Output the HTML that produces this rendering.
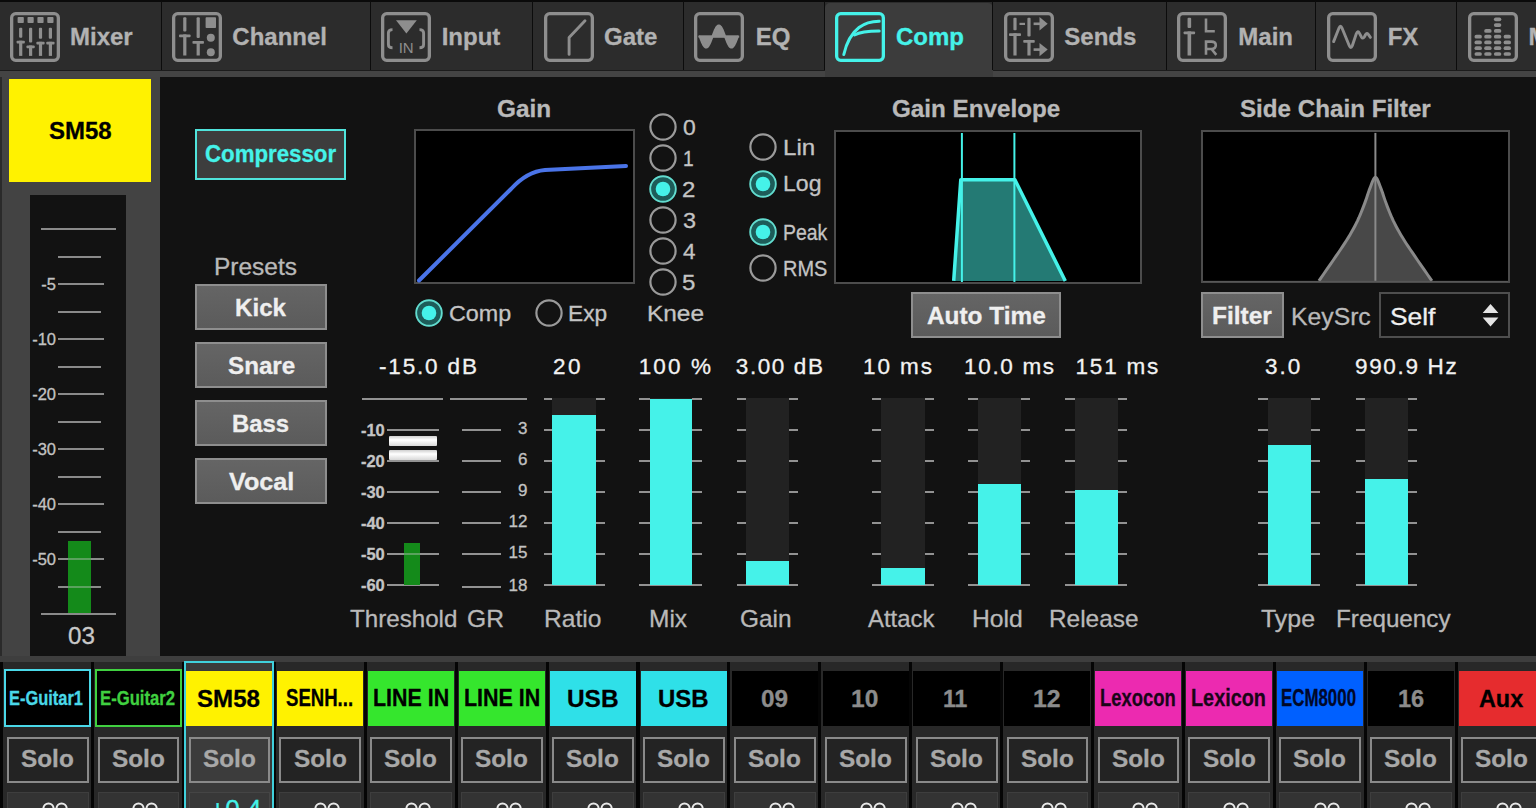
<!DOCTYPE html>
<html><head><meta charset="utf-8"><style>
html,body{margin:0;padding:0;}
body{width:1536px;height:808px;overflow:hidden;position:relative;background:#121212;font-family:"Liberation Sans",sans-serif;}
.a{position:absolute;}
.t{white-space:nowrap;-webkit-text-stroke:0.3px currentColor;}
svg text{font-family:"Liberation Sans",sans-serif;}
</style></head><body>
<div class="a" style="left:0px;top:0px;width:1536px;height:70px;background:#2c2c2c;"></div>
<div class="a" style="left:0px;top:0px;width:1536px;height:1.5px;background:#0a0a0a;"></div>
<div class="a" style="left:0px;top:69.5px;width:1536px;height:1.5px;background:#1c1c1c;"></div>
<div class="a" style="left:0px;top:71px;width:1536px;height:6px;background:#444444;"></div>
<div class="a" style="left:160.7px;top:1px;width:1.2px;height:69px;background:#0c0c0c;"></div>
<div class="a" style="left:369.8px;top:1px;width:1.2px;height:69px;background:#0c0c0c;"></div>
<div class="a" style="left:531.7px;top:1px;width:1.2px;height:69px;background:#0c0c0c;"></div>
<div class="a" style="left:683px;top:1px;width:1.2px;height:69px;background:#0c0c0c;"></div>
<div class="a" style="left:1165.7px;top:1px;width:1.2px;height:69px;background:#0c0c0c;"></div>
<div class="a" style="left:1315px;top:1px;width:1.2px;height:69px;background:#0c0c0c;"></div>
<div class="a" style="left:1456px;top:1px;width:1.2px;height:69px;background:#0c0c0c;"></div>
<div class="a" style="left:824.5px;top:2.5px;width:168px;height:74.5px;background:#3c3c3c;border-top-left-radius:5px;border-top-right-radius:5px;"></div>
<div class="a" style="left:823.8px;top:1px;width:1.2px;height:69px;background:#0c0c0c;"></div>
<div class="a" style="left:992px;top:1px;width:1.2px;height:69px;background:#0c0c0c;"></div>
<svg class="a" style="left:10px;top:12px" width="50" height="50" viewBox="0 0 50 50"><rect x="1.65" y="1.65" width="46.7" height="46.7" rx="4" ry="4" fill="none" stroke="#8e8e8e" stroke-width="3.3"/><rect x="7.6" y="5" width="6.2" height="6" rx="0.8" fill="#8e8e8e"/><rect x="9.1" y="15.7" width="3.2" height="10" rx="1" fill="#8e8e8e"/><rect x="9.1" y="28.7" width="3.2" height="15.2" fill="#8e8e8e"/><rect x="6.6" y="28.7" width="8.2" height="2.8" rx="0.8" fill="#8e8e8e"/><rect x="17.5" y="5" width="6.2" height="6" rx="0.8" fill="#8e8e8e"/><rect x="19" y="15.7" width="3.2" height="14.8" rx="1" fill="#8e8e8e"/><rect x="19" y="33.5" width="3.2" height="10.4" fill="#8e8e8e"/><rect x="16.5" y="33.5" width="8.2" height="2.8" rx="0.8" fill="#8e8e8e"/><rect x="27.4" y="5" width="6.2" height="6" rx="0.8" fill="#8e8e8e"/><rect x="28.9" y="15.7" width="3.2" height="11.1" rx="1" fill="#8e8e8e"/><rect x="28.9" y="29.8" width="3.2" height="14.1" fill="#8e8e8e"/><rect x="26.4" y="29.8" width="8.2" height="2.8" rx="0.8" fill="#8e8e8e"/><rect x="37.3" y="5" width="6.2" height="6" rx="0.8" fill="#8e8e8e"/><rect x="38.8" y="15.7" width="3.2" height="11.1" rx="1" fill="#8e8e8e"/><rect x="38.8" y="29.8" width="3.2" height="14.1" fill="#8e8e8e"/><rect x="36.3" y="29.8" width="8.2" height="2.8" rx="0.8" fill="#8e8e8e"/></svg>
<svg class="a" style="left:172px;top:12px" width="50" height="50" viewBox="0 0 50 50"><rect x="1.65" y="1.65" width="46.7" height="46.7" rx="4" ry="4" fill="none" stroke="#8e8e8e" stroke-width="3.3"/><rect x="11.2" y="5.3" width="3.2" height="14.1" rx="1" fill="#8e8e8e"/><rect x="11.2" y="22.4" width="3.2" height="21.1" fill="#8e8e8e"/><rect x="7.05" y="22.4" width="11.5" height="2.8" rx="0.8" fill="#8e8e8e"/><rect x="24.6" y="5.3" width="3.2" height="20.7" rx="1" fill="#8e8e8e"/><rect x="24.6" y="29" width="3.2" height="14.5" fill="#8e8e8e"/><rect x="20.45" y="29" width="11.5" height="2.8" rx="0.8" fill="#8e8e8e"/><rect x="33.6" y="5.3" width="10.4" height="10.7" rx="0.8" fill="#8e8e8e"/><circle cx="38.8" cy="25.7" r="4" fill="#8e8e8e"/><circle cx="38.8" cy="40.2" r="4" fill="#8e8e8e"/></svg>
<svg class="a" style="left:380.8px;top:12px" width="50" height="50" viewBox="0 0 50 50"><rect x="1.65" y="1.65" width="46.7" height="46.7" rx="4" ry="4" fill="none" stroke="#8e8e8e" stroke-width="3.3"/><path d="M15 8.2 L35.8 8.2 L25.4 21.6 Z" fill="#8e8e8e"/><path d="M11.5 17.6 Q7.4 17.6 7.4 21 L7.4 32.5 Q7.4 35.8 11.5 35.8" fill="none" stroke="#8e8e8e" stroke-width="2.9"/><path d="M38.5 17.6 Q42.6 17.6 42.6 21 L42.6 32.5 Q42.6 35.8 38.5 35.8" fill="none" stroke="#8e8e8e" stroke-width="2.9"/><text x="25.2" y="41" font-size="15" fill="#8e8e8e" text-anchor="middle" style="font-family:Liberation Sans">IN</text></svg>
<svg class="a" style="left:543.5px;top:12px" width="50" height="50" viewBox="0 0 50 50"><rect x="1.65" y="1.65" width="46.7" height="46.7" rx="4" ry="4" fill="none" stroke="#8e8e8e" stroke-width="3.3"/><path d="M25.1 42.4 L25.1 25.5 L41 8.8" fill="none" stroke="#8e8e8e" stroke-width="2.9" stroke-linecap="round" stroke-linejoin="round"/></svg>
<svg class="a" style="left:694.4px;top:12px" width="50" height="50" viewBox="0 0 50 50"><rect x="1.65" y="1.65" width="46.7" height="46.7" rx="4" ry="4" fill="none" stroke="#8e8e8e" stroke-width="3.3"/><rect x="4.4" y="23.6" width="40.8" height="2" fill="#8e8e8e"/><path d="M5.8 24.5 L5.8 24.43 L6.75 27 L7.7 29.44 L8.65 31.6 L9.6 33.37 L10.55 34.64 L11.5 35.36 L12.45 35.47 L13.4 34.97 L14.35 33.9 L15.3 32.3 L16.25 30.27 L17.2 27.93 L18.15 25.39 L19.1 22.8 L20.05 20.31 L21 18.05 L21.95 16.14 L22.9 14.7 L23.85 13.8 L24.8 13.5 L25.75 13.8 L26.7 14.7 L27.65 16.14 L28.6 18.05 L29.55 20.31 L30.5 22.8 L31.45 25.39 L32.4 27.93 L33.35 30.27 L34.3 32.3 L35.25 33.9 L36.2 34.97 L37.15 35.47 L38.1 35.36 L39.05 34.64 L40 33.37 L40.95 31.6 L41.9 29.44 L42.85 27 L43.8 24.43 L43.8 24.5 Z" fill="#8e8e8e" stroke="#8e8e8e" stroke-width="2.2" stroke-linejoin="round"/></svg>
<svg class="a" style="left:835px;top:12px" width="50" height="50" viewBox="0 0 50 50"><rect x="1.65" y="1.65" width="46.7" height="46.7" rx="4" ry="4" fill="none" stroke="#45f2e9" stroke-width="3.3"/><path d="M8.8 42.5 Q13 24 24 15.5 Q32 9.5 44.2 9.3" fill="none" stroke="#45f2e9" stroke-width="3" stroke-linecap="round"/><path d="M19.5 23 Q26.5 19 44.2 19" fill="none" stroke="#45f2e9" stroke-width="3" stroke-linecap="round"/></svg>
<svg class="a" style="left:1003.7px;top:12px" width="50" height="50" viewBox="0 0 50 50"><rect x="1.65" y="1.65" width="46.7" height="46.7" rx="4" ry="4" fill="none" stroke="#8e8e8e" stroke-width="3.3"/><rect x="9.4" y="5.7" width="3.2" height="12.5" rx="1" fill="#8e8e8e"/><rect x="9.4" y="21.2" width="3.2" height="22.3" fill="#8e8e8e"/><rect x="5" y="21.2" width="12" height="2.8" rx="0.8" fill="#8e8e8e"/><rect x="23.4" y="5.7" width="3.2" height="18.9" rx="1" fill="#8e8e8e"/><rect x="23.4" y="27.9" width="3.2" height="15.6" fill="#8e8e8e"/><rect x="19.25" y="27.9" width="11.5" height="2.8" rx="0.8" fill="#8e8e8e"/><rect x="15.5" y="10.8" width="5.5" height="2.2" fill="#8e8e8e"/><rect x="29.6" y="10.5" width="7" height="2.6" fill="#8e8e8e"/><path d="M35.5 5 L43.7 11.8 L35.5 18.5 Z" fill="#8e8e8e"/><rect x="29.6" y="36.3" width="7" height="2.6" fill="#8e8e8e"/><path d="M35.5 30.9 L43.7 37.6 L35.5 44.3 Z" fill="#8e8e8e"/></svg>
<svg class="a" style="left:1177.3px;top:12px" width="50" height="50" viewBox="0 0 50 50"><rect x="1.65" y="1.65" width="46.7" height="46.7" rx="4" ry="4" fill="none" stroke="#8e8e8e" stroke-width="3.3"/><rect x="10.55" y="5.7" width="3.6" height="10.3" rx="1" fill="#8e8e8e"/><rect x="10.55" y="19.4" width="3.6" height="24.1" fill="#8e8e8e"/><rect x="6.65" y="19.4" width="11.4" height="2.8" rx="0.8" fill="#8e8e8e"/><path d="M29 6.4 L29 19.2 L37.8 19.2" fill="none" stroke="#8e8e8e" stroke-width="2.6"/><path d="M29 42.8 L29 29.6 L34.3 29.6 Q38.8 29.6 38.8 33.3 Q38.8 37 34.3 37 L29 37 M34.5 37 L39.3 42.8" fill="none" stroke="#8e8e8e" stroke-width="2.6"/></svg>
<svg class="a" style="left:1326.5px;top:12px" width="50" height="50" viewBox="0 0 50 50"><rect x="1.65" y="1.65" width="46.7" height="46.7" rx="4" ry="4" fill="none" stroke="#8e8e8e" stroke-width="3.3"/><path d="M6.6 29.6 L12 16 Q13.5 12.3 15 16 L22.3 33.8 Q23.8 37.3 25.3 33.8 L29.3 21.8 Q30.8 17.8 32.5 21.3 L34.5 25.2 Q35.8 27.2 37.3 25 L38.6 22.5 Q39.8 20.6 41.3 22.4 L43.4 25.4" fill="none" stroke="#8e8e8e" stroke-width="2.9" stroke-linecap="round" stroke-linejoin="round"/></svg>
<svg class="a" style="left:1467.8px;top:12px" width="50" height="50" viewBox="0 0 50 50"><rect x="1.65" y="1.65" width="46.7" height="46.7" rx="4" ry="4" fill="none" stroke="#8e8e8e" stroke-width="3.3"/><rect x="6.5" y="40.15" width="7.4" height="3.7" rx="1.85" fill="#8e8e8e"/><rect x="6.5" y="34.37" width="7.4" height="3.7" rx="1.85" fill="#8e8e8e"/><rect x="6.5" y="28.59" width="7.4" height="3.7" rx="1.85" fill="#8e8e8e"/><rect x="6.5" y="22.81" width="7.4" height="3.7" rx="1.85" fill="#8e8e8e"/><rect x="16.2" y="40.15" width="7.4" height="3.7" rx="1.85" fill="#8e8e8e"/><rect x="16.2" y="34.37" width="7.4" height="3.7" rx="1.85" fill="#8e8e8e"/><rect x="16.2" y="28.59" width="7.4" height="3.7" rx="1.85" fill="#8e8e8e"/><rect x="16.2" y="22.81" width="7.4" height="3.7" rx="1.85" fill="#8e8e8e"/><rect x="16.2" y="17.03" width="7.4" height="3.7" rx="1.85" fill="#8e8e8e"/><rect x="25.9" y="40.15" width="7.4" height="3.7" rx="1.85" fill="#8e8e8e"/><rect x="25.9" y="34.37" width="7.4" height="3.7" rx="1.85" fill="#8e8e8e"/><rect x="25.9" y="28.59" width="7.4" height="3.7" rx="1.85" fill="#8e8e8e"/><rect x="25.9" y="22.81" width="7.4" height="3.7" rx="1.85" fill="#8e8e8e"/><rect x="25.9" y="17.03" width="7.4" height="3.7" rx="1.85" fill="#8e8e8e"/><rect x="25.9" y="11.25" width="7.4" height="3.7" rx="1.85" fill="#8e8e8e"/><rect x="25.9" y="5.47" width="7.4" height="3.7" rx="1.85" fill="#8e8e8e"/><rect x="35.6" y="40.15" width="7.4" height="3.7" rx="1.85" fill="#8e8e8e"/><rect x="35.6" y="34.37" width="7.4" height="3.7" rx="1.85" fill="#8e8e8e"/><rect x="35.6" y="28.59" width="7.4" height="3.7" rx="1.85" fill="#8e8e8e"/><rect x="35.6" y="22.81" width="7.4" height="3.7" rx="1.85" fill="#8e8e8e"/></svg>
<div class="a t" style="left:70px;top:25.18px;font-size:24px;line-height:24px;font-weight:700;color:#b2b2b2;">Mixer</div>
<div class="a t" style="left:232.3px;top:25.18px;font-size:24px;line-height:24px;font-weight:700;color:#b2b2b2;">Channel</div>
<div class="a t" style="left:441.7px;top:25.18px;font-size:24px;line-height:24px;font-weight:700;color:#b2b2b2;">Input</div>
<div class="a t" style="left:604px;top:25.18px;font-size:24px;line-height:24px;font-weight:700;color:#b2b2b2;">Gate</div>
<div class="a t" style="left:755.7px;top:25.18px;font-size:24px;line-height:24px;font-weight:700;color:#b2b2b2;">EQ</div>
<div class="a t" style="left:896px;top:25.18px;font-size:24px;line-height:24px;font-weight:700;color:#45f2e9;">Comp</div>
<div class="a t" style="left:1064.3px;top:25.18px;font-size:24px;line-height:24px;font-weight:700;color:#b2b2b2;">Sends</div>
<div class="a t" style="left:1238.3px;top:25.18px;font-size:24px;line-height:24px;font-weight:700;color:#b2b2b2;">Main</div>
<div class="a t" style="left:1387.7px;top:25.18px;font-size:24px;line-height:24px;font-weight:700;color:#b2b2b2;">FX</div>
<div class="a t" style="left:1528.6px;top:25.18px;font-size:24px;line-height:24px;font-weight:700;color:#b2b2b2;">Mixer</div>
<div class="a" style="left:0px;top:77px;width:160px;height:579px;background:#434343;"></div>
<div class="a" style="left:0px;top:77px;width:1.5px;height:579px;background:#2a2a2a;"></div>
<div class="a" style="left:9px;top:78.5px;width:142px;height:103.5px;background:#fff200;"></div>
<div id="t0" class="a t" style="left:49.05px;top:118.88px;font-size:24px;line-height:24px;font-weight:700;color:#000;transform-origin:0 0;transform:scaleX(0.9992)">SM58</div>
<div class="a" style="left:30px;top:195px;width:96px;height:460.6px;background:#121212;"></div>
<div class="a" style="left:67.5px;top:540.7px;width:23.2px;height:72.3px;background:#148a1a;"></div>
<div class="a" style="left:40.5px;top:228px;width:75.8px;height:2.2px;background:#8a8a8a;"></div>
<div class="a" style="left:58px;top:255.5px;width:43px;height:2.2px;background:#8a8a8a;"></div>
<div class="a" style="left:58px;top:283px;width:46px;height:2.2px;background:#8a8a8a;"></div>
<div class="a" style="left:58px;top:310.5px;width:43px;height:2.2px;background:#8a8a8a;"></div>
<div class="a" style="left:58px;top:338px;width:46px;height:2.2px;background:#8a8a8a;"></div>
<div class="a" style="left:58px;top:365.5px;width:43px;height:2.2px;background:#8a8a8a;"></div>
<div class="a" style="left:58px;top:393px;width:46px;height:2.2px;background:#8a8a8a;"></div>
<div class="a" style="left:58px;top:420.5px;width:43px;height:2.2px;background:#8a8a8a;"></div>
<div class="a" style="left:58px;top:448px;width:46px;height:2.2px;background:#8a8a8a;"></div>
<div class="a" style="left:58px;top:475.5px;width:43px;height:2.2px;background:#8a8a8a;"></div>
<div class="a" style="left:58px;top:503px;width:46px;height:2.2px;background:#8a8a8a;"></div>
<div class="a" style="left:58px;top:530.5px;width:43px;height:2.2px;background:#8a8a8a;"></div>
<div class="a" style="left:58px;top:558px;width:9.5px;height:2.2px;background:#8a8a8a;"></div>
<div class="a" style="left:67.5px;top:558px;width:23.2px;height:2.2px;background:#5aa25e;"></div>
<div class="a" style="left:90.7px;top:558px;width:13.3px;height:2.2px;background:#8a8a8a;"></div>
<div class="a" style="left:58px;top:585.5px;width:9.5px;height:2.2px;background:#8a8a8a;"></div>
<div class="a" style="left:67.5px;top:585.5px;width:23.2px;height:2.2px;background:#5aa25e;"></div>
<div class="a" style="left:90.7px;top:585.5px;width:10.3px;height:2.2px;background:#8a8a8a;"></div>
<div class="a" style="left:40.5px;top:613px;width:75.8px;height:2.2px;background:#8a8a8a;"></div>
<div class="a t" style="left:-944px;width:1000px;text-align:right;top:276.03px;font-size:16.5px;line-height:16.5px;font-weight:400;color:#c2c2c2;">-5</div>
<div class="a t" style="left:-944px;width:1000px;text-align:right;top:331.03px;font-size:16.5px;line-height:16.5px;font-weight:400;color:#c2c2c2;">-10</div>
<div class="a t" style="left:-944px;width:1000px;text-align:right;top:386.03px;font-size:16.5px;line-height:16.5px;font-weight:400;color:#c2c2c2;">-20</div>
<div class="a t" style="left:-944px;width:1000px;text-align:right;top:441.03px;font-size:16.5px;line-height:16.5px;font-weight:400;color:#c2c2c2;">-30</div>
<div class="a t" style="left:-944px;width:1000px;text-align:right;top:496.03px;font-size:16.5px;line-height:16.5px;font-weight:400;color:#c2c2c2;">-40</div>
<div class="a t" style="left:-944px;width:1000px;text-align:right;top:551.03px;font-size:16.5px;line-height:16.5px;font-weight:400;color:#c2c2c2;">-50</div>
<div id="t1" class="a t" style="left:67.71px;top:625.03px;font-size:23px;line-height:23px;font-weight:400;color:#c8c8c8;transform-origin:0 0;transform:scaleX(1.0526)">03</div>
<div class="a" style="left:195.2px;top:129.4px;width:150.8px;height:50.4px;background:#3d3d3d;border:2px solid #50e4dc;box-sizing:border-box;"></div>
<div id="t2" class="a t" style="left:204.89px;top:142.26px;font-size:24.5px;line-height:24.5px;font-weight:700;color:#45f2e9;transform-origin:0 0;transform:scaleX(0.9084)">Compressor</div>
<div id="t3" class="a t" style="left:213.76px;top:254.68px;font-size:24px;line-height:24px;font-weight:400;color:#b9b9b9;transform-origin:0 0;transform:scaleX(1.0191)">Presets</div>
<div class="a" style="left:195.3px;top:284.3px;width:131.7px;height:46.2px;background:linear-gradient(#656565,#5b5b5b);border:2px solid #8e8e8e;box-sizing:border-box;"></div>
<div id="t4" class="a t" style="left:235.19px;top:296.08px;font-size:24px;line-height:24px;font-weight:700;color:#efefef;transform-origin:0 0;transform:scaleX(1.0061)">Kick</div>
<div class="a" style="left:195.3px;top:342.3px;width:131.7px;height:46.2px;background:linear-gradient(#656565,#5b5b5b);border:2px solid #8e8e8e;box-sizing:border-box;"></div>
<div id="t5" class="a t" style="left:227.64px;top:354.08px;font-size:24px;line-height:24px;font-weight:700;color:#efefef;transform-origin:0 0;transform:scaleX(1.0077)">Snare</div>
<div class="a" style="left:195.3px;top:400.3px;width:131.7px;height:46.2px;background:linear-gradient(#656565,#5b5b5b);border:2px solid #8e8e8e;box-sizing:border-box;"></div>
<div id="t6" class="a t" style="left:232.31px;top:412.08px;font-size:24px;line-height:24px;font-weight:700;color:#efefef;transform-origin:0 0;transform:scaleX(0.9945)">Bass</div>
<div class="a" style="left:195.3px;top:458.3px;width:131.7px;height:46.2px;background:linear-gradient(#656565,#5b5b5b);border:2px solid #8e8e8e;box-sizing:border-box;"></div>
<div id="t7" class="a t" style="left:228.84px;top:470.08px;font-size:24px;line-height:24px;font-weight:700;color:#efefef;transform-origin:0 0;transform:scaleX(1.0490)">Vocal</div>
<div id="t8" class="a t" style="left:496.79px;top:96.98px;font-size:24px;line-height:24px;font-weight:700;color:#b9b9b9;transform-origin:0 0;transform:scaleX(1.0137)">Gain</div>
<div class="a" style="left:414px;top:129px;width:221px;height:155px;background:#000;border:2px solid #4c4c4c;box-sizing:border-box;"></div>
<svg class="a" style="left:414px;top:129px" width="221" height="155" viewBox="414 129 221 155"><path d="M419 280.5 L511 189 Q527 171.5 545 170 L626 165.9" fill="none" stroke="#4a74e8" stroke-width="4" stroke-linecap="round"/></svg>
<svg class="a" style="left:647.6px;top:112.2px" width="30" height="30" viewBox="-15 -15 30 30"><circle r="12.6" fill="none" stroke="#9a9a9a" stroke-width="2.2"/></svg>
<div id="t9" class="a t" style="left:682.62px;top:116.78px;font-size:22px;line-height:22px;font-weight:400;color:#c4c4c4;transform-origin:0 0;transform:scaleX(1.0419)">0</div>
<svg class="a" style="left:647.6px;top:143.1px" width="30" height="30" viewBox="-15 -15 30 30"><circle r="12.6" fill="none" stroke="#9a9a9a" stroke-width="2.2"/></svg>
<div id="t10" class="a t" style="left:682.97px;top:147.88px;font-size:22px;line-height:22px;font-weight:400;color:#c4c4c4;transform-origin:0 0;transform:scaleX(0.8737)">1</div>
<svg class="a" style="left:647.6px;top:174px" width="30" height="30" viewBox="-15 -15 30 30"><circle r="12.8" fill="#1d5c59" stroke="#62dccf" stroke-width="1.9"/><circle r="7.3" fill="#45f2e9"/></svg>
<div id="t11" class="a t" style="left:682.31px;top:178.98px;font-size:22px;line-height:22px;font-weight:400;color:#c4c4c4;transform-origin:0 0;transform:scaleX(1.0927)">2</div>
<svg class="a" style="left:647.6px;top:204.9px" width="30" height="30" viewBox="-15 -15 30 30"><circle r="12.6" fill="none" stroke="#9a9a9a" stroke-width="2.2"/></svg>
<div id="t12" class="a t" style="left:682.6px;top:210.08px;font-size:22px;line-height:22px;font-weight:400;color:#c4c4c4;transform-origin:0 0;transform:scaleX(1.0667)">3</div>
<svg class="a" style="left:647.6px;top:235.8px" width="30" height="30" viewBox="-15 -15 30 30"><circle r="12.6" fill="none" stroke="#9a9a9a" stroke-width="2.2"/></svg>
<div id="t13" class="a t" style="left:682.89px;top:241.18px;font-size:22px;line-height:22px;font-weight:400;color:#c4c4c4;transform-origin:0 0;transform:scaleX(1.0182)">4</div>
<svg class="a" style="left:647.6px;top:266.7px" width="30" height="30" viewBox="-15 -15 30 30"><circle r="12.6" fill="none" stroke="#9a9a9a" stroke-width="2.2"/></svg>
<div id="t14" class="a t" style="left:682.31px;top:272.28px;font-size:22px;line-height:22px;font-weight:400;color:#c4c4c4;transform-origin:0 0;transform:scaleX(1.0927)">5</div>
<svg class="a" style="left:413.8px;top:297.9px" width="30" height="30" viewBox="-15 -15 30 30"><circle r="12.8" fill="#1d5c59" stroke="#62dccf" stroke-width="1.9"/><circle r="7.3" fill="#45f2e9"/></svg>
<div id="t15" class="a t" style="left:448.54px;top:303.38px;font-size:22px;line-height:22px;font-weight:400;color:#c4c4c4;transform-origin:0 0;transform:scaleX(1.0608)">Comp</div>
<svg class="a" style="left:533.7px;top:297.9px" width="30" height="30" viewBox="-15 -15 30 30"><circle r="12.6" fill="none" stroke="#9a9a9a" stroke-width="2.2"/></svg>
<div id="t16" class="a t" style="left:568.39px;top:303.38px;font-size:22px;line-height:22px;font-weight:400;color:#c4c4c4;transform-origin:0 0;transform:scaleX(1.0326)">Exp</div>
<div id="t17" class="a t" style="left:647.06px;top:303.38px;font-size:22px;line-height:22px;font-weight:400;color:#c4c4c4;transform-origin:0 0;transform:scaleX(1.1097)">Knee</div>
<div id="t18" class="a t" style="left:891.59px;top:96.98px;font-size:24px;line-height:24px;font-weight:700;color:#b9b9b9;transform-origin:0 0;transform:scaleX(1.0088)">Gain Envelope</div>
<svg class="a" style="left:748.2px;top:131.9px" width="30" height="30" viewBox="-15 -15 30 30"><circle r="12.6" fill="none" stroke="#9a9a9a" stroke-width="2.2"/></svg>
<div id="t19" class="a t" style="left:782.58px;top:137.28px;font-size:22px;line-height:22px;font-weight:400;color:#c4c4c4;transform-origin:0 0;transform:scaleX(1.0962)">Lin</div>
<svg class="a" style="left:748.2px;top:168.6px" width="30" height="30" viewBox="-15 -15 30 30"><circle r="12.8" fill="#1d5c59" stroke="#62dccf" stroke-width="1.9"/><circle r="7.3" fill="#45f2e9"/></svg>
<div id="t20" class="a t" style="left:782.67px;top:173.18px;font-size:22px;line-height:22px;font-weight:400;color:#c4c4c4;transform-origin:0 0;transform:scaleX(1.0478)">Log</div>
<svg class="a" style="left:748.2px;top:217.1px" width="30" height="30" viewBox="-15 -15 30 30"><circle r="12.8" fill="#1d5c59" stroke="#62dccf" stroke-width="1.9"/><circle r="7.3" fill="#45f2e9"/></svg>
<div id="t21" class="a t" style="left:782.96px;top:222.28px;font-size:22px;line-height:22px;font-weight:400;color:#c4c4c4;transform-origin:0 0;transform:scaleX(0.8825)">Peak</div>
<svg class="a" style="left:748.2px;top:253.4px" width="30" height="30" viewBox="-15 -15 30 30"><circle r="12.6" fill="none" stroke="#9a9a9a" stroke-width="2.2"/></svg>
<div id="t22" class="a t" style="left:782.91px;top:258.18px;font-size:22px;line-height:22px;font-weight:400;color:#c4c4c4;transform-origin:0 0;transform:scaleX(0.9059)">RMS</div>
<div class="a" style="left:833.6px;top:130px;width:308.4px;height:153.8px;background:#000;border:2px solid #4c4c4c;box-sizing:border-box;"></div>
<svg class="a" style="left:833.6px;top:130px" width="308.4" height="153.8" viewBox="833.6 130 308.4 153.8"><path d="M953.3 281 L960.4 179.7 L1014.5 179.7 L1064.9 281 Z" fill="#247a74"/><path d="M953.3 281 L960.4 179.7 L1014.5 179.7 L1064.9 281" fill="none" stroke="#45f2e9" stroke-width="3.5" stroke-linejoin="round"/><line x1="961.5" y1="133" x2="961.5" y2="282" stroke="#45f2e9" stroke-width="2"/><line x1="1014" y1="133" x2="1014" y2="282" stroke="#45f2e9" stroke-width="2"/></svg>
<div class="a" style="left:910.8px;top:292.1px;width:150.4px;height:45.9px;background:linear-gradient(#656565,#5b5b5b);border:2px solid #8e8e8e;box-sizing:border-box;"></div>
<div id="t23" class="a t" style="left:926.59px;top:303.58px;font-size:24px;line-height:24px;font-weight:700;color:#efefef;transform-origin:0 0;transform:scaleX(1.0156)">Auto Time</div>
<div id="t24" class="a t" style="left:1239.74px;top:96.98px;font-size:24px;line-height:24px;font-weight:700;color:#b9b9b9;transform-origin:0 0;transform:scaleX(1.0072)">Side Chain Filter</div>
<div class="a" style="left:1201px;top:130.1px;width:308.8px;height:152.7px;background:#000;border:2px solid #4c4c4c;box-sizing:border-box;"></div>
<svg class="a" style="left:1201px;top:130.1px" width="308.8" height="152.7" viewBox="1201 130.1 308.8 152.7"><path d="M1318.90 281.00 L1320.82 278.24 L1323.51 274.37 L1326.68 269.81 L1330.02 265.00 L1333.23 260.35 L1336.00 256.30 L1338.36 252.83 L1340.57 249.59 L1342.64 246.52 L1344.60 243.56 L1346.48 240.64 L1348.30 237.70 L1350.05 234.77 L1351.71 231.91 L1353.28 229.10 L1354.78 226.31 L1356.22 223.51 L1357.60 220.70 L1358.92 217.85 L1360.16 214.98 L1361.34 212.11 L1362.47 209.26 L1363.55 206.45 L1364.60 203.70 L1365.59 200.98 L1366.52 198.25 L1367.40 195.56 L1368.26 192.96 L1369.12 190.49 L1370.00 188.20 L1370.90 185.88 L1371.80 183.45 L1372.70 181.16 L1373.60 179.23 L1374.50 177.90 L1375.40 177.40 L1376.30 177.90 L1377.20 179.23 L1378.10 181.16 L1379.00 183.45 L1379.90 185.88 L1380.80 188.20 L1381.68 190.49 L1382.54 192.96 L1383.40 195.56 L1384.28 198.25 L1385.21 200.98 L1386.20 203.70 L1387.25 206.45 L1388.33 209.26 L1389.46 212.11 L1390.64 214.98 L1391.88 217.85 L1393.20 220.70 L1394.58 223.51 L1396.02 226.31 L1397.52 229.10 L1399.09 231.91 L1400.75 234.77 L1402.50 237.70 L1404.32 240.64 L1406.20 243.56 L1408.16 246.52 L1410.23 249.59 L1412.44 252.83 L1414.80 256.30 L1417.57 260.35 L1420.78 265.00 L1424.12 269.81 L1427.29 274.37 L1429.98 278.24 L1431.90 281.00 Z" fill="#484848"/><path d="M1318.90 281.00 L1320.82 278.24 L1323.51 274.37 L1326.68 269.81 L1330.02 265.00 L1333.23 260.35 L1336.00 256.30 L1338.36 252.83 L1340.57 249.59 L1342.64 246.52 L1344.60 243.56 L1346.48 240.64 L1348.30 237.70 L1350.05 234.77 L1351.71 231.91 L1353.28 229.10 L1354.78 226.31 L1356.22 223.51 L1357.60 220.70 L1358.92 217.85 L1360.16 214.98 L1361.34 212.11 L1362.47 209.26 L1363.55 206.45 L1364.60 203.70 L1365.59 200.98 L1366.52 198.25 L1367.40 195.56 L1368.26 192.96 L1369.12 190.49 L1370.00 188.20 L1370.90 185.88 L1371.80 183.45 L1372.70 181.16 L1373.60 179.23 L1374.50 177.90 L1375.40 177.40 L1376.30 177.90 L1377.20 179.23 L1378.10 181.16 L1379.00 183.45 L1379.90 185.88 L1380.80 188.20 L1381.68 190.49 L1382.54 192.96 L1383.40 195.56 L1384.28 198.25 L1385.21 200.98 L1386.20 203.70 L1387.25 206.45 L1388.33 209.26 L1389.46 212.11 L1390.64 214.98 L1391.88 217.85 L1393.20 220.70 L1394.58 223.51 L1396.02 226.31 L1397.52 229.10 L1399.09 231.91 L1400.75 234.77 L1402.50 237.70 L1404.32 240.64 L1406.20 243.56 L1408.16 246.52 L1410.23 249.59 L1412.44 252.83 L1414.80 256.30 L1417.57 260.35 L1420.78 265.00 L1424.12 269.81 L1427.29 274.37 L1429.98 278.24 L1431.90 281.00" fill="none" stroke="#8a8a8a" stroke-width="3" stroke-linejoin="round"/><line x1="1375.4" y1="133" x2="1375.4" y2="281" stroke="#8a8a8a" stroke-width="2"/><line x1="1203" y1="281.5" x2="1508" y2="281.5" stroke="#5a5a5a" stroke-width="1"/></svg>
<div class="a" style="left:1200.8px;top:291.9px;width:83.3px;height:46.4px;background:linear-gradient(#656565,#5b5b5b);border:2px solid #8e8e8e;box-sizing:border-box;"></div>
<div id="t25" class="a t" style="left:1212.37px;top:303.78px;font-size:24px;line-height:24px;font-weight:700;color:#efefef;transform-origin:0 0;transform:scaleX(1.0185)">Filter</div>
<div id="t26" class="a t" style="left:1291.34px;top:305.38px;font-size:24px;line-height:24px;font-weight:400;color:#b9b9b9;transform-origin:0 0;transform:scaleX(1.0309)">KeySrc</div>
<div class="a" style="left:1379.3px;top:292.1px;width:130.3px;height:45.6px;background:#121212;border:2px solid #4e4e4e;box-sizing:border-box;"></div>
<div id="t27" class="a t" style="left:1390.4px;top:304.68px;font-size:24px;line-height:24px;font-weight:400;color:#f0f0f0;transform-origin:0 0;transform:scaleX(1.0988)">Self</div>
<svg class="a" style="left:1480px;top:300px" width="20" height="30" viewBox="1480 300 20 30"><path d="M1482.7 313 L1490.5 304 L1498.4 313 Z M1482.7 317.5 L1490.5 326.4 L1498.4 317.5 Z" fill="#e4e4e4"/></svg>
<div class="a" style="left:543.5px;top:397.7px;width:61.3px;height:2px;background:#929292;"></div>
<div class="a" style="left:543.5px;top:428.75px;width:61.3px;height:2px;background:#929292;"></div>
<div class="a" style="left:543.5px;top:459.8px;width:61.3px;height:2px;background:#929292;"></div>
<div class="a" style="left:543.5px;top:490.85px;width:61.3px;height:2px;background:#929292;"></div>
<div class="a" style="left:543.5px;top:521.9px;width:61.3px;height:2px;background:#929292;"></div>
<div class="a" style="left:543.5px;top:552.95px;width:61.3px;height:2px;background:#929292;"></div>
<div class="a" style="left:543.5px;top:584px;width:61.3px;height:2px;background:#929292;"></div>
<div class="a" style="left:552.4px;top:397.7px;width:43.8px;height:187.3px;background:#222222;"></div>
<div class="a" style="left:552.4px;top:415.4px;width:43.8px;height:169.6px;background:#45f2e9;"></div>
<div id="t28" class="a t" style="left:553.1px;top:355.95px;font-size:22.5px;line-height:22.5px;font-weight:400;color:#f2f2f2;letter-spacing:2.450px">20</div>
<div id="t29" class="a t" style="left:543.55px;top:606.68px;font-size:24px;line-height:24px;font-weight:400;color:#b9b9b9;transform-origin:0 0;transform:scaleX(1.0245)">Ratio</div>
<div class="a" style="left:639.3px;top:397.7px;width:62.4px;height:2px;background:#929292;"></div>
<div class="a" style="left:639.3px;top:428.75px;width:62.4px;height:2px;background:#929292;"></div>
<div class="a" style="left:639.3px;top:459.8px;width:62.4px;height:2px;background:#929292;"></div>
<div class="a" style="left:639.3px;top:490.85px;width:62.4px;height:2px;background:#929292;"></div>
<div class="a" style="left:639.3px;top:521.9px;width:62.4px;height:2px;background:#929292;"></div>
<div class="a" style="left:639.3px;top:552.95px;width:62.4px;height:2px;background:#929292;"></div>
<div class="a" style="left:639.3px;top:584px;width:62.4px;height:2px;background:#929292;"></div>
<div class="a" style="left:649.7px;top:397.7px;width:42.7px;height:187.3px;background:#222222;"></div>
<div class="a" style="left:649.7px;top:398.7px;width:42.7px;height:186.3px;background:#45f2e9;"></div>
<div id="t30" class="a t" style="left:638.75px;top:355.95px;font-size:22.5px;line-height:22.5px;font-weight:400;color:#f2f2f2;letter-spacing:2.088px">100 %</div>
<div id="t31" class="a t" style="left:649.46px;top:606.68px;font-size:24px;line-height:24px;font-weight:400;color:#b9b9b9;transform-origin:0 0;transform:scaleX(1.0200)">Mix</div>
<div class="a" style="left:737px;top:397.7px;width:61.2px;height:2px;background:#929292;"></div>
<div class="a" style="left:737px;top:428.75px;width:61.2px;height:2px;background:#929292;"></div>
<div class="a" style="left:737px;top:459.8px;width:61.2px;height:2px;background:#929292;"></div>
<div class="a" style="left:737px;top:490.85px;width:61.2px;height:2px;background:#929292;"></div>
<div class="a" style="left:737px;top:521.9px;width:61.2px;height:2px;background:#929292;"></div>
<div class="a" style="left:737px;top:552.95px;width:61.2px;height:2px;background:#929292;"></div>
<div class="a" style="left:737px;top:584px;width:61.2px;height:2px;background:#929292;"></div>
<div class="a" style="left:746.3px;top:397.7px;width:42.7px;height:187.3px;background:#222222;"></div>
<div class="a" style="left:746.3px;top:561px;width:42.7px;height:24px;background:#45f2e9;"></div>
<div id="t32" class="a t" style="left:735.85px;top:355.95px;font-size:22.5px;line-height:22.5px;font-weight:400;color:#f2f2f2;letter-spacing:1.583px">3.00 dB</div>
<div id="t33" class="a t" style="left:740.03px;top:606.68px;font-size:24px;line-height:24px;font-weight:400;color:#b9b9b9;transform-origin:0 0;transform:scaleX(1.0157)">Gain</div>
<div class="a" style="left:871.6px;top:397.7px;width:62px;height:2px;background:#929292;"></div>
<div class="a" style="left:871.6px;top:428.75px;width:62px;height:2px;background:#929292;"></div>
<div class="a" style="left:871.6px;top:459.8px;width:62px;height:2px;background:#929292;"></div>
<div class="a" style="left:871.6px;top:490.85px;width:62px;height:2px;background:#929292;"></div>
<div class="a" style="left:871.6px;top:521.9px;width:62px;height:2px;background:#929292;"></div>
<div class="a" style="left:871.6px;top:552.95px;width:62px;height:2px;background:#929292;"></div>
<div class="a" style="left:871.6px;top:584px;width:62px;height:2px;background:#929292;"></div>
<div class="a" style="left:880.8px;top:397.7px;width:43.9px;height:187.3px;background:#222222;"></div>
<div class="a" style="left:880.8px;top:568.4px;width:43.9px;height:16.6px;background:#45f2e9;"></div>
<div id="t34" class="a t" style="left:863.05px;top:355.95px;font-size:22.5px;line-height:22.5px;font-weight:400;color:#f2f2f2;letter-spacing:1.913px">10 ms</div>
<div id="t35" class="a t" style="left:867.8px;top:606.68px;font-size:24px;line-height:24px;font-weight:400;color:#b9b9b9;transform-origin:0 0;transform:scaleX(0.9948)">Attack</div>
<div class="a" style="left:968.1px;top:397.7px;width:62.4px;height:2px;background:#929292;"></div>
<div class="a" style="left:968.1px;top:428.75px;width:62.4px;height:2px;background:#929292;"></div>
<div class="a" style="left:968.1px;top:459.8px;width:62.4px;height:2px;background:#929292;"></div>
<div class="a" style="left:968.1px;top:490.85px;width:62.4px;height:2px;background:#929292;"></div>
<div class="a" style="left:968.1px;top:521.9px;width:62.4px;height:2px;background:#929292;"></div>
<div class="a" style="left:968.1px;top:552.95px;width:62.4px;height:2px;background:#929292;"></div>
<div class="a" style="left:968.1px;top:584px;width:62.4px;height:2px;background:#929292;"></div>
<div class="a" style="left:978.1px;top:397.7px;width:43.1px;height:187.3px;background:#222222;"></div>
<div class="a" style="left:978.1px;top:483.7px;width:43.1px;height:101.3px;background:#45f2e9;"></div>
<div id="t36" class="a t" style="left:964.05px;top:355.95px;font-size:22.5px;line-height:22.5px;font-weight:400;color:#f2f2f2;letter-spacing:1.667px">10.0 ms</div>
<div id="t37" class="a t" style="left:972.14px;top:606.68px;font-size:24px;line-height:24px;font-weight:400;color:#b9b9b9;transform-origin:0 0;transform:scaleX(1.0295)">Hold</div>
<div class="a" style="left:1064.7px;top:397.7px;width:62.3px;height:2px;background:#929292;"></div>
<div class="a" style="left:1064.7px;top:428.75px;width:62.3px;height:2px;background:#929292;"></div>
<div class="a" style="left:1064.7px;top:459.8px;width:62.3px;height:2px;background:#929292;"></div>
<div class="a" style="left:1064.7px;top:490.85px;width:62.3px;height:2px;background:#929292;"></div>
<div class="a" style="left:1064.7px;top:521.9px;width:62.3px;height:2px;background:#929292;"></div>
<div class="a" style="left:1064.7px;top:552.95px;width:62.3px;height:2px;background:#929292;"></div>
<div class="a" style="left:1064.7px;top:584px;width:62.3px;height:2px;background:#929292;"></div>
<div class="a" style="left:1074.7px;top:397.7px;width:43.1px;height:187.3px;background:#222222;"></div>
<div class="a" style="left:1074.7px;top:489.6px;width:43.1px;height:95.4px;background:#45f2e9;"></div>
<div id="t38" class="a t" style="left:1075.55px;top:355.95px;font-size:22.5px;line-height:22.5px;font-weight:400;color:#f2f2f2;letter-spacing:1.790px">151 ms</div>
<div id="t39" class="a t" style="left:1049.37px;top:606.68px;font-size:24px;line-height:24px;font-weight:400;color:#b9b9b9;transform-origin:0 0;transform:scaleX(1.0165)">Release</div>
<div class="a" style="left:1258.2px;top:397.7px;width:62.1px;height:2px;background:#929292;"></div>
<div class="a" style="left:1258.2px;top:428.75px;width:62.1px;height:2px;background:#929292;"></div>
<div class="a" style="left:1258.2px;top:459.8px;width:62.1px;height:2px;background:#929292;"></div>
<div class="a" style="left:1258.2px;top:490.85px;width:62.1px;height:2px;background:#929292;"></div>
<div class="a" style="left:1258.2px;top:521.9px;width:62.1px;height:2px;background:#929292;"></div>
<div class="a" style="left:1258.2px;top:552.95px;width:62.1px;height:2px;background:#929292;"></div>
<div class="a" style="left:1258.2px;top:584px;width:62.1px;height:2px;background:#929292;"></div>
<div class="a" style="left:1268.3px;top:397.7px;width:42.7px;height:187.3px;background:#222222;"></div>
<div class="a" style="left:1268.3px;top:445.1px;width:42.7px;height:139.9px;background:#45f2e9;"></div>
<div id="t40" class="a t" style="left:1264.95px;top:355.95px;font-size:22.5px;line-height:22.5px;font-weight:400;color:#f2f2f2;letter-spacing:1.975px">3.0</div>
<div id="t41" class="a t" style="left:1260.88px;top:606.68px;font-size:24px;line-height:24px;font-weight:400;color:#b9b9b9;transform-origin:0 0;transform:scaleX(1.0376)">Type</div>
<div class="a" style="left:1355.5px;top:397.7px;width:61.3px;height:2px;background:#929292;"></div>
<div class="a" style="left:1355.5px;top:428.75px;width:61.3px;height:2px;background:#929292;"></div>
<div class="a" style="left:1355.5px;top:459.8px;width:61.3px;height:2px;background:#929292;"></div>
<div class="a" style="left:1355.5px;top:490.85px;width:61.3px;height:2px;background:#929292;"></div>
<div class="a" style="left:1355.5px;top:521.9px;width:61.3px;height:2px;background:#929292;"></div>
<div class="a" style="left:1355.5px;top:552.95px;width:61.3px;height:2px;background:#929292;"></div>
<div class="a" style="left:1355.5px;top:584px;width:61.3px;height:2px;background:#929292;"></div>
<div class="a" style="left:1364.8px;top:397.7px;width:43.5px;height:187.3px;background:#222222;"></div>
<div class="a" style="left:1364.8px;top:479.2px;width:43.5px;height:105.8px;background:#45f2e9;"></div>
<div id="t42" class="a t" style="left:1355px;top:355.95px;font-size:22.5px;line-height:22.5px;font-weight:400;color:#f2f2f2;letter-spacing:1.671px">990.9 Hz</div>
<div id="t43" class="a t" style="left:1335.88px;top:606.68px;font-size:24px;line-height:24px;font-weight:400;color:#b9b9b9;transform-origin:0 0;transform:scaleX(1.0108)">Frequency</div>
<div id="t44" class="a t" style="left:379px;top:355.95px;font-size:22.5px;line-height:22.5px;font-weight:400;color:#f2f2f2;letter-spacing:1.836px">-15.0 dB</div>
<div class="a" style="left:361.5px;top:397.7px;width:81.4px;height:2px;background:#929292;"></div>
<div class="a" style="left:450.3px;top:397.7px;width:77.2px;height:2px;background:#929292;"></div>
<div class="a" style="left:387px;top:428.9px;width:52px;height:2px;background:#929292;"></div>
<div class="a t" style="left:-615.2px;width:1000px;text-align:right;top:422.23px;font-size:16.5px;line-height:16.5px;font-weight:700;color:#c4c4c4;">-10</div>
<div class="a" style="left:387px;top:459.92px;width:52px;height:2px;background:#929292;"></div>
<div class="a t" style="left:-615.2px;width:1000px;text-align:right;top:453.25px;font-size:16.5px;line-height:16.5px;font-weight:700;color:#c4c4c4;">-20</div>
<div class="a" style="left:387px;top:490.94px;width:52px;height:2px;background:#929292;"></div>
<div class="a t" style="left:-615.2px;width:1000px;text-align:right;top:484.27px;font-size:16.5px;line-height:16.5px;font-weight:700;color:#c4c4c4;">-30</div>
<div class="a" style="left:387px;top:521.96px;width:52px;height:2px;background:#929292;"></div>
<div class="a t" style="left:-615.2px;width:1000px;text-align:right;top:515.29px;font-size:16.5px;line-height:16.5px;font-weight:700;color:#c4c4c4;">-40</div>
<div class="a" style="left:387px;top:552.98px;width:52px;height:2px;background:#929292;"></div>
<div class="a t" style="left:-615.2px;width:1000px;text-align:right;top:546.31px;font-size:16.5px;line-height:16.5px;font-weight:700;color:#c4c4c4;">-50</div>
<div class="a" style="left:387px;top:584px;width:52px;height:2px;background:#929292;"></div>
<div class="a t" style="left:-615.2px;width:1000px;text-align:right;top:577.33px;font-size:16.5px;line-height:16.5px;font-weight:700;color:#c4c4c4;">-60</div>
<div class="a" style="left:403.9px;top:543.1px;width:15.9px;height:41.9px;background:#148a1a;"></div>
<div class="a" style="left:403.9px;top:552.9px;width:15.9px;height:2px;background:#5aa25e;"></div>
<div class="a" style="left:389px;top:435.8px;width:48.3px;height:10px;background:linear-gradient(#cfcfcf,#ffffff 40%,#d8d8d8);border-radius:1px;"></div>
<div class="a" style="left:389px;top:449.5px;width:48.3px;height:10.5px;background:linear-gradient(#cfcfcf,#ffffff 40%,#d8d8d8);border-radius:1px;"></div>
<div class="a" style="left:461.8px;top:428.9px;width:39px;height:2px;background:#929292;"></div>
<div class="a t" style="left:-472.5px;width:1000px;text-align:right;top:419.71px;font-size:17px;line-height:17px;font-weight:400;color:#c2c2c2;">3</div>
<div class="a" style="left:461.8px;top:459.92px;width:39px;height:2px;background:#929292;"></div>
<div class="a t" style="left:-472.5px;width:1000px;text-align:right;top:450.73px;font-size:17px;line-height:17px;font-weight:400;color:#c2c2c2;">6</div>
<div class="a" style="left:461.8px;top:490.94px;width:39px;height:2px;background:#929292;"></div>
<div class="a t" style="left:-472.5px;width:1000px;text-align:right;top:481.75px;font-size:17px;line-height:17px;font-weight:400;color:#c2c2c2;">9</div>
<div class="a" style="left:461.8px;top:521.96px;width:39px;height:2px;background:#929292;"></div>
<div class="a t" style="left:-472.5px;width:1000px;text-align:right;top:512.77px;font-size:17px;line-height:17px;font-weight:400;color:#c2c2c2;">12</div>
<div class="a" style="left:461.8px;top:552.98px;width:39px;height:2px;background:#929292;"></div>
<div class="a t" style="left:-472.5px;width:1000px;text-align:right;top:543.79px;font-size:17px;line-height:17px;font-weight:400;color:#c2c2c2;">15</div>
<div class="a" style="left:461.8px;top:585.9px;width:39px;height:2px;background:#929292;"></div>
<div class="a t" style="left:-472.5px;width:1000px;text-align:right;top:576.71px;font-size:17px;line-height:17px;font-weight:400;color:#c2c2c2;">18</div>
<div id="t45" class="a t" style="left:349.5px;top:606.68px;font-size:24px;line-height:24px;font-weight:400;color:#b9b9b9;transform-origin:0 0;transform:scaleX(1.0062)">Threshold</div>
<div id="t46" class="a t" style="left:466.72px;top:606.68px;font-size:24px;line-height:24px;font-weight:400;color:#b9b9b9;transform-origin:0 0;transform:scaleX(1.0252)">GR</div>
<div class="a" style="left:0px;top:655.6px;width:1536px;height:6.4px;background:#3e3e3e;"></div>
<div class="a" style="left:0px;top:662px;width:1536px;height:146px;background:#050505;"></div>
<div class="a" style="left:3.2px;top:662px;width:87.9px;height:146px;background:#282828;"></div>
<div class="a" style="left:4px;top:669px;width:87.1px;height:58px;background:#000;border:2.3px solid #4ad8e8;box-sizing:border-box;"></div>
<div id="t47" class="a t" style="left:9.17px;top:687.67px;font-size:20px;line-height:20px;font-weight:700;color:#4ad8e8;transform-origin:0 0;transform:scaleX(0.8215)">E-Guitar1</div>
<div class="a" style="left:6.7px;top:737.3px;width:81.9px;height:45.3px;background:#232323;border:2px solid #8a8a8a;box-sizing:border-box;"></div>
<div id="t48" class="a t" style="left:20.89px;top:747.48px;font-size:24px;line-height:24px;font-weight:700;color:#a8a8a8;transform-origin:0 0;transform:scaleX(1.0149)">Solo</div>
<div class="a" style="left:6.7px;top:791.5px;width:81.9px;height:38.5px;background:#333333;"></div>
<div class="a" style="left:6.7px;top:791.5px;width:81.9px;height:38.5px;border:1.5px solid #3e3e3e;box-sizing:border-box;"></div>
<svg class="a" style="left:32.5px;top:800px" width="40" height="8" viewBox="0 800 40 8"><circle cx="15.5" cy="808.6" r="5.1" fill="none" stroke="#e8e8e8" stroke-width="2"/><circle cx="28.6" cy="808.6" r="5.1" fill="none" stroke="#e8e8e8" stroke-width="2"/></svg>
<div class="a" style="left:94.1px;top:662px;width:87.9px;height:146px;background:#282828;"></div>
<div class="a" style="left:94.9px;top:669px;width:87.1px;height:58px;background:#000;border:2.3px solid #40d040;box-sizing:border-box;"></div>
<div id="t49" class="a t" style="left:100.36px;top:687.67px;font-size:20px;line-height:20px;font-weight:700;color:#40d040;transform-origin:0 0;transform:scaleX(0.8341)">E-Guitar2</div>
<div class="a" style="left:97.6px;top:737.3px;width:81.9px;height:45.3px;background:#232323;border:2px solid #8a8a8a;box-sizing:border-box;"></div>
<div id="t50" class="a t" style="left:111.79px;top:747.48px;font-size:24px;line-height:24px;font-weight:700;color:#a8a8a8;transform-origin:0 0;transform:scaleX(1.0149)">Solo</div>
<div class="a" style="left:97.6px;top:791.5px;width:81.9px;height:38.5px;background:#333333;"></div>
<div class="a" style="left:97.6px;top:791.5px;width:81.9px;height:38.5px;border:1.5px solid #3e3e3e;box-sizing:border-box;"></div>
<svg class="a" style="left:123.4px;top:800px" width="40" height="8" viewBox="0 800 40 8"><circle cx="15.5" cy="808.6" r="5.1" fill="none" stroke="#e8e8e8" stroke-width="2"/><circle cx="28.6" cy="808.6" r="5.1" fill="none" stroke="#e8e8e8" stroke-width="2"/></svg>
<div class="a" style="left:185px;top:662px;width:87.9px;height:146px;background:#3a3a3a;"></div>
<div class="a" style="left:186.2px;top:670.7px;width:86.2px;height:55.3px;background:#fff200;"></div>
<div id="t51" class="a t" style="left:197.25px;top:686.68px;font-size:24px;line-height:24px;font-weight:700;color:#000;transform-origin:0 0;transform:scaleX(1.0041)">SM58</div>
<div class="a" style="left:188.5px;top:737.3px;width:81.9px;height:45.3px;background:#3c3c3c;border:2px solid #8a8a8a;box-sizing:border-box;"></div>
<div id="t52" class="a t" style="left:202.69px;top:747.48px;font-size:24px;line-height:24px;font-weight:700;color:#a8a8a8;transform-origin:0 0;transform:scaleX(1.0149)">Solo</div>
<div class="a" style="left:188.5px;top:791.5px;width:81.9px;height:38.5px;background:#383838;"></div>
<div class="a" style="left:188.5px;top:791.5px;width:81.9px;height:38.5px;border:1.5px solid #454545;box-sizing:border-box;"></div>
<div id="t53" class="a t" style="left:210.35px;top:796.49px;font-size:26px;line-height:26px;font-weight:400;color:#45f2e9;transform-origin:0 0;transform:scaleX(1.0030)">+0.4</div>
<div class="a" style="left:275.9px;top:662px;width:87.9px;height:146px;background:#282828;"></div>
<div class="a" style="left:277.1px;top:670.7px;width:86.2px;height:55.3px;background:#fff200;"></div>
<div id="t54" class="a t" style="left:286.01px;top:687.11px;font-size:23.5px;line-height:23.5px;font-weight:700;color:#000;transform-origin:0 0;transform:scaleX(0.7903)">SENH...</div>
<div class="a" style="left:279.4px;top:737.3px;width:81.9px;height:45.3px;background:#232323;border:2px solid #8a8a8a;box-sizing:border-box;"></div>
<div id="t55" class="a t" style="left:293.59px;top:747.48px;font-size:24px;line-height:24px;font-weight:700;color:#a8a8a8;transform-origin:0 0;transform:scaleX(1.0149)">Solo</div>
<div class="a" style="left:279.4px;top:791.5px;width:81.9px;height:38.5px;background:#333333;"></div>
<div class="a" style="left:279.4px;top:791.5px;width:81.9px;height:38.5px;border:1.5px solid #3e3e3e;box-sizing:border-box;"></div>
<svg class="a" style="left:305.2px;top:800px" width="40" height="8" viewBox="0 800 40 8"><circle cx="15.5" cy="808.6" r="5.1" fill="none" stroke="#e8e8e8" stroke-width="2"/><circle cx="28.6" cy="808.6" r="5.1" fill="none" stroke="#e8e8e8" stroke-width="2"/></svg>
<div class="a" style="left:366.8px;top:662px;width:87.9px;height:146px;background:#282828;"></div>
<div class="a" style="left:368px;top:670.7px;width:86.2px;height:55.3px;background:#35e62d;"></div>
<div id="t56" class="a t" style="left:372.73px;top:687.11px;font-size:23.5px;line-height:23.5px;font-weight:700;color:#000;transform-origin:0 0;transform:scaleX(0.9118)">LINE IN</div>
<div class="a" style="left:370.3px;top:737.3px;width:81.9px;height:45.3px;background:#232323;border:2px solid #8a8a8a;box-sizing:border-box;"></div>
<div id="t57" class="a t" style="left:384.49px;top:747.48px;font-size:24px;line-height:24px;font-weight:700;color:#a8a8a8;transform-origin:0 0;transform:scaleX(1.0149)">Solo</div>
<div class="a" style="left:370.3px;top:791.5px;width:81.9px;height:38.5px;background:#333333;"></div>
<div class="a" style="left:370.3px;top:791.5px;width:81.9px;height:38.5px;border:1.5px solid #3e3e3e;box-sizing:border-box;"></div>
<svg class="a" style="left:396.1px;top:800px" width="40" height="8" viewBox="0 800 40 8"><circle cx="15.5" cy="808.6" r="5.1" fill="none" stroke="#e8e8e8" stroke-width="2"/><circle cx="28.6" cy="808.6" r="5.1" fill="none" stroke="#e8e8e8" stroke-width="2"/></svg>
<div class="a" style="left:457.7px;top:662px;width:87.9px;height:146px;background:#282828;"></div>
<div class="a" style="left:458.9px;top:670.7px;width:86.2px;height:55.3px;background:#35e62d;"></div>
<div id="t58" class="a t" style="left:463.83px;top:687.11px;font-size:23.5px;line-height:23.5px;font-weight:700;color:#000;transform-origin:0 0;transform:scaleX(0.9130)">LINE IN</div>
<div class="a" style="left:461.2px;top:737.3px;width:81.9px;height:45.3px;background:#232323;border:2px solid #8a8a8a;box-sizing:border-box;"></div>
<div id="t59" class="a t" style="left:475.39px;top:747.48px;font-size:24px;line-height:24px;font-weight:700;color:#a8a8a8;transform-origin:0 0;transform:scaleX(1.0149)">Solo</div>
<div class="a" style="left:461.2px;top:791.5px;width:81.9px;height:38.5px;background:#333333;"></div>
<div class="a" style="left:461.2px;top:791.5px;width:81.9px;height:38.5px;border:1.5px solid #3e3e3e;box-sizing:border-box;"></div>
<svg class="a" style="left:487px;top:800px" width="40" height="8" viewBox="0 800 40 8"><circle cx="15.5" cy="808.6" r="5.1" fill="none" stroke="#e8e8e8" stroke-width="2"/><circle cx="28.6" cy="808.6" r="5.1" fill="none" stroke="#e8e8e8" stroke-width="2"/></svg>
<div class="a" style="left:548.6px;top:662px;width:87.9px;height:146px;background:#282828;"></div>
<div class="a" style="left:549.8px;top:670.7px;width:86.2px;height:55.3px;background:#2fe0e8;"></div>
<div id="t60" class="a t" style="left:566.98px;top:686.68px;font-size:24px;line-height:24px;font-weight:700;color:#000;transform-origin:0 0;transform:scaleX(1.0167)">USB</div>
<div class="a" style="left:552.1px;top:737.3px;width:81.9px;height:45.3px;background:#232323;border:2px solid #8a8a8a;box-sizing:border-box;"></div>
<div id="t61" class="a t" style="left:566.29px;top:747.48px;font-size:24px;line-height:24px;font-weight:700;color:#a8a8a8;transform-origin:0 0;transform:scaleX(1.0149)">Solo</div>
<div class="a" style="left:552.1px;top:791.5px;width:81.9px;height:38.5px;background:#333333;"></div>
<div class="a" style="left:552.1px;top:791.5px;width:81.9px;height:38.5px;border:1.5px solid #3e3e3e;box-sizing:border-box;"></div>
<svg class="a" style="left:577.9px;top:800px" width="40" height="8" viewBox="0 800 40 8"><circle cx="15.5" cy="808.6" r="5.1" fill="none" stroke="#e8e8e8" stroke-width="2"/><circle cx="28.6" cy="808.6" r="5.1" fill="none" stroke="#e8e8e8" stroke-width="2"/></svg>
<div class="a" style="left:639.5px;top:662px;width:87.9px;height:146px;background:#282828;"></div>
<div class="a" style="left:640.7px;top:670.7px;width:86.2px;height:55.3px;background:#2fe0e8;"></div>
<div id="t62" class="a t" style="left:658.1px;top:686.68px;font-size:24px;line-height:24px;font-weight:700;color:#000;transform-origin:0 0;transform:scaleX(0.9979)">USB</div>
<div class="a" style="left:643px;top:737.3px;width:81.9px;height:45.3px;background:#232323;border:2px solid #8a8a8a;box-sizing:border-box;"></div>
<div id="t63" class="a t" style="left:657.19px;top:747.48px;font-size:24px;line-height:24px;font-weight:700;color:#a8a8a8;transform-origin:0 0;transform:scaleX(1.0149)">Solo</div>
<div class="a" style="left:643px;top:791.5px;width:81.9px;height:38.5px;background:#333333;"></div>
<div class="a" style="left:643px;top:791.5px;width:81.9px;height:38.5px;border:1.5px solid #3e3e3e;box-sizing:border-box;"></div>
<svg class="a" style="left:668.8px;top:800px" width="40" height="8" viewBox="0 800 40 8"><circle cx="15.5" cy="808.6" r="5.1" fill="none" stroke="#e8e8e8" stroke-width="2"/><circle cx="28.6" cy="808.6" r="5.1" fill="none" stroke="#e8e8e8" stroke-width="2"/></svg>
<div class="a" style="left:730.4px;top:662px;width:87.9px;height:146px;background:#282828;"></div>
<div class="a" style="left:731.6px;top:670.7px;width:86.2px;height:55.3px;background:#000;"></div>
<div id="t64" class="a t" style="left:760.69px;top:686.68px;font-size:24px;line-height:24px;font-weight:700;color:#8c8c8c;transform-origin:0 0;transform:scaleX(1.0141)">09</div>
<div class="a" style="left:733.9px;top:737.3px;width:81.9px;height:45.3px;background:#232323;border:2px solid #8a8a8a;box-sizing:border-box;"></div>
<div id="t65" class="a t" style="left:748.09px;top:747.48px;font-size:24px;line-height:24px;font-weight:700;color:#a8a8a8;transform-origin:0 0;transform:scaleX(1.0149)">Solo</div>
<div class="a" style="left:733.9px;top:791.5px;width:81.9px;height:38.5px;background:#333333;"></div>
<div class="a" style="left:733.9px;top:791.5px;width:81.9px;height:38.5px;border:1.5px solid #3e3e3e;box-sizing:border-box;"></div>
<svg class="a" style="left:759.7px;top:800px" width="40" height="8" viewBox="0 800 40 8"><circle cx="15.5" cy="808.6" r="5.1" fill="none" stroke="#e8e8e8" stroke-width="2"/><circle cx="28.6" cy="808.6" r="5.1" fill="none" stroke="#e8e8e8" stroke-width="2"/></svg>
<div class="a" style="left:821.3px;top:662px;width:87.9px;height:146px;background:#282828;"></div>
<div class="a" style="left:822.5px;top:670.7px;width:86.2px;height:55.3px;background:#000;"></div>
<div id="t66" class="a t" style="left:851.47px;top:686.68px;font-size:24px;line-height:24px;font-weight:700;color:#8c8c8c;transform-origin:0 0;transform:scaleX(1.0227)">10</div>
<div class="a" style="left:824.8px;top:737.3px;width:81.9px;height:45.3px;background:#232323;border:2px solid #8a8a8a;box-sizing:border-box;"></div>
<div id="t67" class="a t" style="left:838.99px;top:747.48px;font-size:24px;line-height:24px;font-weight:700;color:#a8a8a8;transform-origin:0 0;transform:scaleX(1.0149)">Solo</div>
<div class="a" style="left:824.8px;top:791.5px;width:81.9px;height:38.5px;background:#333333;"></div>
<div class="a" style="left:824.8px;top:791.5px;width:81.9px;height:38.5px;border:1.5px solid #3e3e3e;box-sizing:border-box;"></div>
<svg class="a" style="left:850.6px;top:800px" width="40" height="8" viewBox="0 800 40 8"><circle cx="15.5" cy="808.6" r="5.1" fill="none" stroke="#e8e8e8" stroke-width="2"/><circle cx="28.6" cy="808.6" r="5.1" fill="none" stroke="#e8e8e8" stroke-width="2"/></svg>
<div class="a" style="left:912.2px;top:662px;width:87.9px;height:146px;background:#282828;"></div>
<div class="a" style="left:913.4px;top:670.7px;width:86.2px;height:55.3px;background:#000;"></div>
<div id="t68" class="a t" style="left:942.76px;top:686.68px;font-size:24px;line-height:24px;font-weight:700;color:#8c8c8c;transform-origin:0 0;transform:scaleX(0.9591)">11</div>
<div class="a" style="left:915.7px;top:737.3px;width:81.9px;height:45.3px;background:#232323;border:2px solid #8a8a8a;box-sizing:border-box;"></div>
<div id="t69" class="a t" style="left:929.89px;top:747.48px;font-size:24px;line-height:24px;font-weight:700;color:#a8a8a8;transform-origin:0 0;transform:scaleX(1.0149)">Solo</div>
<div class="a" style="left:915.7px;top:791.5px;width:81.9px;height:38.5px;background:#333333;"></div>
<div class="a" style="left:915.7px;top:791.5px;width:81.9px;height:38.5px;border:1.5px solid #3e3e3e;box-sizing:border-box;"></div>
<svg class="a" style="left:941.5px;top:800px" width="40" height="8" viewBox="0 800 40 8"><circle cx="15.5" cy="808.6" r="5.1" fill="none" stroke="#e8e8e8" stroke-width="2"/><circle cx="28.6" cy="808.6" r="5.1" fill="none" stroke="#e8e8e8" stroke-width="2"/></svg>
<div class="a" style="left:1003.1px;top:662px;width:87.9px;height:146px;background:#282828;"></div>
<div class="a" style="left:1004.3px;top:670.7px;width:86.2px;height:55.3px;background:#000;"></div>
<div id="t70" class="a t" style="left:1032.85px;top:686.68px;font-size:24px;line-height:24px;font-weight:700;color:#8c8c8c;transform-origin:0 0;transform:scaleX(1.0351)">12</div>
<div class="a" style="left:1006.6px;top:737.3px;width:81.9px;height:45.3px;background:#232323;border:2px solid #8a8a8a;box-sizing:border-box;"></div>
<div id="t71" class="a t" style="left:1020.79px;top:747.48px;font-size:24px;line-height:24px;font-weight:700;color:#a8a8a8;transform-origin:0 0;transform:scaleX(1.0149)">Solo</div>
<div class="a" style="left:1006.6px;top:791.5px;width:81.9px;height:38.5px;background:#333333;"></div>
<div class="a" style="left:1006.6px;top:791.5px;width:81.9px;height:38.5px;border:1.5px solid #3e3e3e;box-sizing:border-box;"></div>
<svg class="a" style="left:1032.4px;top:800px" width="40" height="8" viewBox="0 800 40 8"><circle cx="15.5" cy="808.6" r="5.1" fill="none" stroke="#e8e8e8" stroke-width="2"/><circle cx="28.6" cy="808.6" r="5.1" fill="none" stroke="#e8e8e8" stroke-width="2"/></svg>
<div class="a" style="left:1094px;top:662px;width:87.9px;height:146px;background:#282828;"></div>
<div class="a" style="left:1095.2px;top:670.7px;width:86.2px;height:55.3px;background:#ec2ab0;"></div>
<div id="t72" class="a t" style="left:1100.03px;top:687.11px;font-size:23.5px;line-height:23.5px;font-weight:700;color:#1a0518;transform-origin:0 0;transform:scaleX(0.7829)">Lexocon</div>
<div class="a" style="left:1097.5px;top:737.3px;width:81.9px;height:45.3px;background:#232323;border:2px solid #8a8a8a;box-sizing:border-box;"></div>
<div id="t73" class="a t" style="left:1111.69px;top:747.48px;font-size:24px;line-height:24px;font-weight:700;color:#a8a8a8;transform-origin:0 0;transform:scaleX(1.0149)">Solo</div>
<div class="a" style="left:1097.5px;top:791.5px;width:81.9px;height:38.5px;background:#333333;"></div>
<div class="a" style="left:1097.5px;top:791.5px;width:81.9px;height:38.5px;border:1.5px solid #3e3e3e;box-sizing:border-box;"></div>
<svg class="a" style="left:1123.3px;top:800px" width="40" height="8" viewBox="0 800 40 8"><circle cx="15.5" cy="808.6" r="5.1" fill="none" stroke="#e8e8e8" stroke-width="2"/><circle cx="28.6" cy="808.6" r="5.1" fill="none" stroke="#e8e8e8" stroke-width="2"/></svg>
<div class="a" style="left:1184.9px;top:662px;width:87.9px;height:146px;background:#282828;"></div>
<div class="a" style="left:1186.1px;top:670.7px;width:86.2px;height:55.3px;background:#ec2ab0;"></div>
<div id="t74" class="a t" style="left:1190.93px;top:687.11px;font-size:23.5px;line-height:23.5px;font-weight:700;color:#1a0518;transform-origin:0 0;transform:scaleX(0.8442)">Lexicon</div>
<div class="a" style="left:1188.4px;top:737.3px;width:81.9px;height:45.3px;background:#232323;border:2px solid #8a8a8a;box-sizing:border-box;"></div>
<div id="t75" class="a t" style="left:1202.59px;top:747.48px;font-size:24px;line-height:24px;font-weight:700;color:#a8a8a8;transform-origin:0 0;transform:scaleX(1.0149)">Solo</div>
<div class="a" style="left:1188.4px;top:791.5px;width:81.9px;height:38.5px;background:#333333;"></div>
<div class="a" style="left:1188.4px;top:791.5px;width:81.9px;height:38.5px;border:1.5px solid #3e3e3e;box-sizing:border-box;"></div>
<svg class="a" style="left:1214.2px;top:800px" width="40" height="8" viewBox="0 800 40 8"><circle cx="15.5" cy="808.6" r="5.1" fill="none" stroke="#e8e8e8" stroke-width="2"/><circle cx="28.6" cy="808.6" r="5.1" fill="none" stroke="#e8e8e8" stroke-width="2"/></svg>
<div class="a" style="left:1275.8px;top:662px;width:87.9px;height:146px;background:#282828;"></div>
<div class="a" style="left:1277px;top:670.7px;width:86.2px;height:55.3px;background:#0060ff;"></div>
<div id="t76" class="a t" style="left:1281.42px;top:687.11px;font-size:23.5px;line-height:23.5px;font-weight:700;color:#00082a;transform-origin:0 0;transform:scaleX(0.7178)">ECM8000</div>
<div class="a" style="left:1279.3px;top:737.3px;width:81.9px;height:45.3px;background:#232323;border:2px solid #8a8a8a;box-sizing:border-box;"></div>
<div id="t77" class="a t" style="left:1293.49px;top:747.48px;font-size:24px;line-height:24px;font-weight:700;color:#a8a8a8;transform-origin:0 0;transform:scaleX(1.0149)">Solo</div>
<div class="a" style="left:1279.3px;top:791.5px;width:81.9px;height:38.5px;background:#333333;"></div>
<div class="a" style="left:1279.3px;top:791.5px;width:81.9px;height:38.5px;border:1.5px solid #3e3e3e;box-sizing:border-box;"></div>
<svg class="a" style="left:1305.1px;top:800px" width="40" height="8" viewBox="0 800 40 8"><circle cx="15.5" cy="808.6" r="5.1" fill="none" stroke="#e8e8e8" stroke-width="2"/><circle cx="28.6" cy="808.6" r="5.1" fill="none" stroke="#e8e8e8" stroke-width="2"/></svg>
<div class="a" style="left:1366.7px;top:662px;width:87.9px;height:146px;background:#282828;"></div>
<div class="a" style="left:1367.9px;top:670.7px;width:86.2px;height:55.3px;background:#000;"></div>
<div id="t78" class="a t" style="left:1397.83px;top:686.68px;font-size:24px;line-height:24px;font-weight:700;color:#8c8c8c;transform-origin:0 0;transform:scaleX(0.9814)">16</div>
<div class="a" style="left:1370.2px;top:737.3px;width:81.9px;height:45.3px;background:#232323;border:2px solid #8a8a8a;box-sizing:border-box;"></div>
<div id="t79" class="a t" style="left:1384.39px;top:747.48px;font-size:24px;line-height:24px;font-weight:700;color:#a8a8a8;transform-origin:0 0;transform:scaleX(1.0149)">Solo</div>
<div class="a" style="left:1370.2px;top:791.5px;width:81.9px;height:38.5px;background:#333333;"></div>
<div class="a" style="left:1370.2px;top:791.5px;width:81.9px;height:38.5px;border:1.5px solid #3e3e3e;box-sizing:border-box;"></div>
<svg class="a" style="left:1396px;top:800px" width="40" height="8" viewBox="0 800 40 8"><circle cx="15.5" cy="808.6" r="5.1" fill="none" stroke="#e8e8e8" stroke-width="2"/><circle cx="28.6" cy="808.6" r="5.1" fill="none" stroke="#e8e8e8" stroke-width="2"/></svg>
<div class="a" style="left:1457.6px;top:662px;width:87.9px;height:146px;background:#282828;"></div>
<div class="a" style="left:1458.8px;top:670.7px;width:86.2px;height:55.3px;background:#e62c2e;"></div>
<div id="t80" class="a t" style="left:1479.01px;top:686.68px;font-size:24px;line-height:24px;font-weight:700;color:#000;transform-origin:0 0;transform:scaleX(0.9730)">Aux</div>
<div class="a" style="left:1461.1px;top:737.3px;width:81.9px;height:45.3px;background:#232323;border:2px solid #8a8a8a;box-sizing:border-box;"></div>
<div id="t81" class="a t" style="left:1475.29px;top:747.48px;font-size:24px;line-height:24px;font-weight:700;color:#a8a8a8;transform-origin:0 0;transform:scaleX(1.0149)">Solo</div>
<div class="a" style="left:1461.1px;top:791.5px;width:81.9px;height:38.5px;background:#333333;"></div>
<div class="a" style="left:1461.1px;top:791.5px;width:81.9px;height:38.5px;border:1.5px solid #3e3e3e;box-sizing:border-box;"></div>
<svg class="a" style="left:1486.9px;top:800px" width="40" height="8" viewBox="0 800 40 8"><circle cx="15.5" cy="808.6" r="5.1" fill="none" stroke="#e8e8e8" stroke-width="2"/><circle cx="28.6" cy="808.6" r="5.1" fill="none" stroke="#e8e8e8" stroke-width="2"/></svg>
<div class="a" style="left:183.5px;top:660.8px;width:90.9px;height:169.2px;border:2.3px solid #40d0dc;box-sizing:border-box;"></div>
</body></html>
